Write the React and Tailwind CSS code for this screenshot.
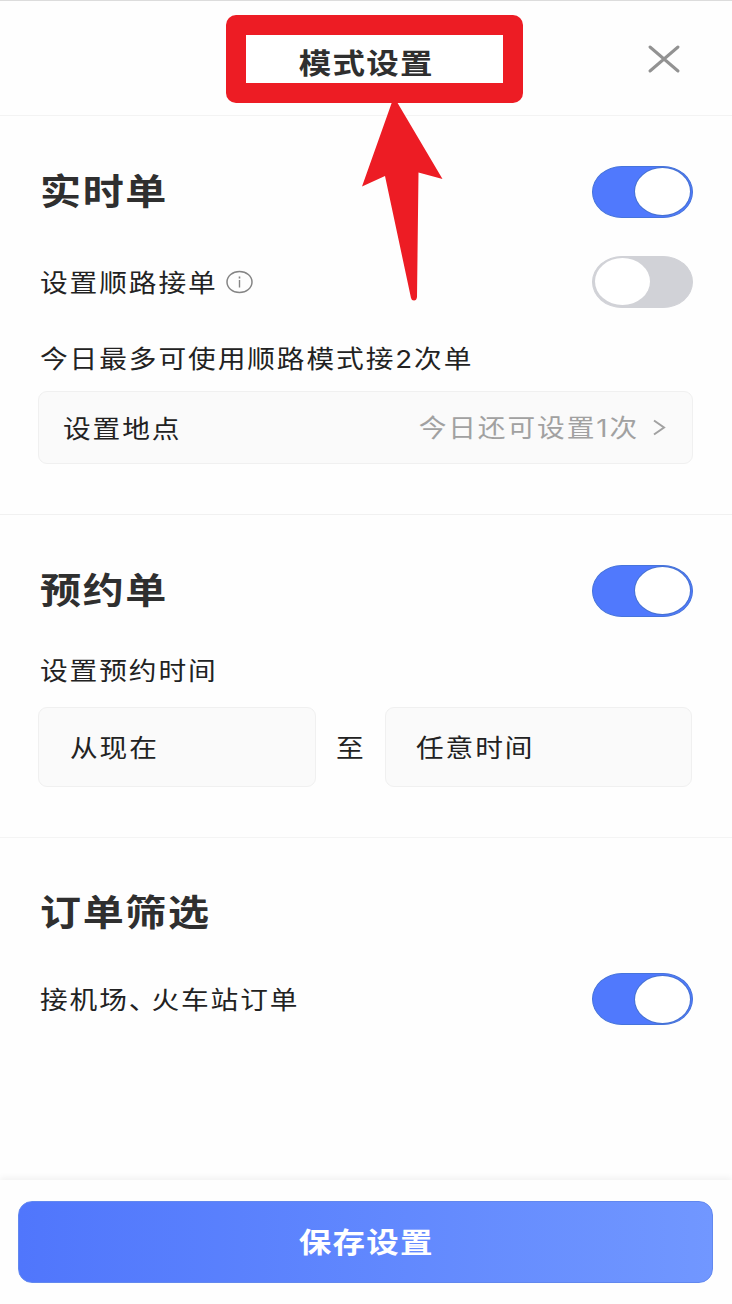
import React, { useState } from "react";
import clsx from "clsx";

function Toggle({ checked, onChange, label }) {
  return (
    <button
      type="button"
      role="switch"
      aria-checked={checked}
      aria-label={label}
      onClick={() => onChange(!checked)}
      className={clsx(
        "flex h-[52px] w-[101px] shrink-0 items-center rounded-[30px/26px] border px-[2px]",
        checked
          ? "justify-end border-[#4674dc] bg-[#5079fd]"
          : "justify-start border-[#d1d2d7] bg-[#d1d2d7]"
      )}
    >
      <span
        className={clsx(
          "h-[47px] w-[55px] rounded-[50%] bg-white",
          checked && "ring-1 ring-[#4672d2]"
        )}
      />
    </button>
  );
}

function Heading({ children }) {
  return (
    <h2 className="-mt-[3px] mb-[3px] origin-left scale-x-[1.14] text-[36px] leading-[52px] font-bold tracking-[1.4px] whitespace-nowrap text-[#2f2f2f]">
      {children}
    </h2>
  );
}

function Label({ children, className }) {
  return (
    <span
      className={clsx(
        "origin-left scale-x-[1.13] text-[24.5px] leading-[36px] tracking-[1.7px] whitespace-nowrap",
        className
      )}
    >
      {children}
    </span>
  );
}

function InfoIcon() {
  return (
    <svg className="h-6 w-7" viewBox="0 0 28 24" fill="none" stroke="#858585">
      <ellipse cx="14.5" cy="12" rx="12.5" ry="10.6" strokeWidth="1.5" />
      <path d="M14.500 10v7.500" strokeWidth="1.4" />
      <path d="M14.500 6.500v2" strokeWidth="1.6" />
    </svg>
  );
}

export default function App() {
  const [realtime, setRealtime] = useState(true);
  const [onRoute, setOnRoute] = useState(false);
  const [booking, setBooking] = useState(true);
  const [station, setStation] = useState(true);

  return (
    <div className="relative flex h-[1304px] w-[732px] flex-col overflow-hidden bg-[#fefefe] font-['Noto_Sans_CJK_SC',sans-serif] text-[#222]">
      <header className="grid h-[116px] shrink-0 grid-cols-[226px_297px_1fr] border-t border-b border-t-[#dcdcdc] border-b-[#f3f3f3] pt-[14px]">
        <div className="col-start-2 flex h-[88px] items-center justify-center rounded-[10px] bg-[#ed1c24] p-5">
          <div className="flex h-full w-full items-center justify-center bg-white pt-[6px] pr-[16px]">
            <h1 className="scale-x-[1.14] text-[28.5px] leading-[40px] font-bold tracking-[1.1px] whitespace-nowrap text-[#2f2f2f]">
              模式设置
            </h1>
          </div>
        </div>
        <button type="button" aria-label="关闭" className="mt-[28px] ml-[123px] h-8 w-9">
          <svg viewBox="0 0 36 32" fill="none" stroke="#929292" strokeWidth="3" strokeLinecap="round">
            <path d="M4 4 32 28M32 4 4 28" />
          </svg>
        </button>
      </header>

      <section className="h-[399px] shrink-0 border-b border-[#f1f1f1] pt-[49.5px] pr-[39.500px] pl-[38px]">
        <div className="flex items-center justify-between pl-0.5">
          <Heading>实时单</Heading>
          <Toggle checked={realtime} onChange={setRealtime} label="实时单" />
        </div>
        <div className="mt-[35px] flex items-center justify-between pt-[3px] pl-[1.5px]">
          <div className="flex items-center gap-[28px]">
            <Label>设置顺路接单</Label>
            <InfoIcon />
          </div>
          <Toggle checked={onRoute} onChange={setOnRoute} label="设置顺路接单" />
        </div>
        <div className="mt-[32px] flex pl-[1.5px]">
          <Label>
            今日最多可使用顺路模式接<span className="font-['Inter',sans-serif]">2</span>次单
          </Label>
        </div>
        <div className="-mr-[0.5px] mt-[14.5px] flex h-[73px] items-center justify-between rounded-[9px] border border-[#f0f0f0] bg-[#fafafa] pr-[26px] pl-[23.5px]">
          <Label>设置地点</Label>
          <div className="flex items-center gap-[13px]">
            <Label className="origin-right text-[#a1a1a1]">
              今日还可设置<span className="font-['Inter',sans-serif]">1</span>次
            </Label>
            <svg className="h-5 w-[14px]" viewBox="0 0 14 20" fill="none" stroke="#a1a1a1" strokeWidth="2">
              <path d="M2 2.500 12 9.500 2 16.500" />
            </svg>
          </div>
        </div>
      </section>

      <section className="h-[323px] shrink-0 border-b border-[#f4f4f4] pt-[49.5px] pr-[40px] pl-[38px]">
        <div className="-mr-[0.5px] flex items-center justify-between pl-0.5">
          <Heading>预约单</Heading>
          <Toggle checked={booking} onChange={setBooking} label="预约单" />
        </div>
        <div className="mt-[35.5px] flex pl-[1.5px]">
          <Label>设置预约时间</Label>
        </div>
        <div className="mt-[19px] grid h-[80px] grid-cols-[278px_69px_1fr] items-stretch">
          <div className="flex items-center rounded-[9px] border border-[#f0f0f0] bg-[#fafafa] pl-[31px]">
            <Label>从现在</Label>
          </div>
          <div className="flex items-center pl-[20px]">
            <Label>至</Label>
          </div>
          <div className="flex items-center rounded-[9px] border border-[#f0f0f0] bg-[#fafafa] pl-[30px]">
            <Label>任意时间</Label>
          </div>
        </div>
      </section>

      <section className="flex-1 pt-[48.5px] pr-[39.500px] pl-[40px]">
        <Heading>订单筛选</Heading>
        <div className="mt-[37.5px] -ml-[0.5px] flex items-center justify-between">
          <Label>
            接机场<span className="mr-[6px] [font-feature-settings:'halt']">、</span>火车站订单
          </Label>
          <Toggle checked={station} onChange={setStation} label="接机场、火车站订单" />
        </div>
      </section>

      <footer className="h-[124px] shrink-0 bg-[#fefefe] pt-[21px] pr-[19px] pl-[18px] shadow-[0_-2px_7px_rgba(0,0,0,0.06)]">
        <button
          type="button"
          className="flex h-[82px] w-full items-center justify-center rounded-[14px] border border-[#6288ef] bg-linear-to-r from-[#5076fc] to-[#7197ff] pb-0.5 pl-0.5 text-white"
        >
          <span className="scale-x-[1.14] text-[28.5px] leading-[40px] font-bold tracking-[1.1px]">
            保存设置
          </span>
        </button>
      </footer>

      {/* arrow pointing up at the title */}
      <svg
        className="pointer-events-none absolute top-[98px] left-[360px] h-[206px] w-[86px]"
        viewBox="0 0 86 206"
        fill="#ed1c24"
      >
        <path d="M32 4Q34.500 1 37 4L82.500 81 58.500 74.500 57 199Q56.500 202.500 54 202.500 51.500 202.500 51 200L25 78 2 88.500Z" />
      </svg>
    </div>
  );
}
